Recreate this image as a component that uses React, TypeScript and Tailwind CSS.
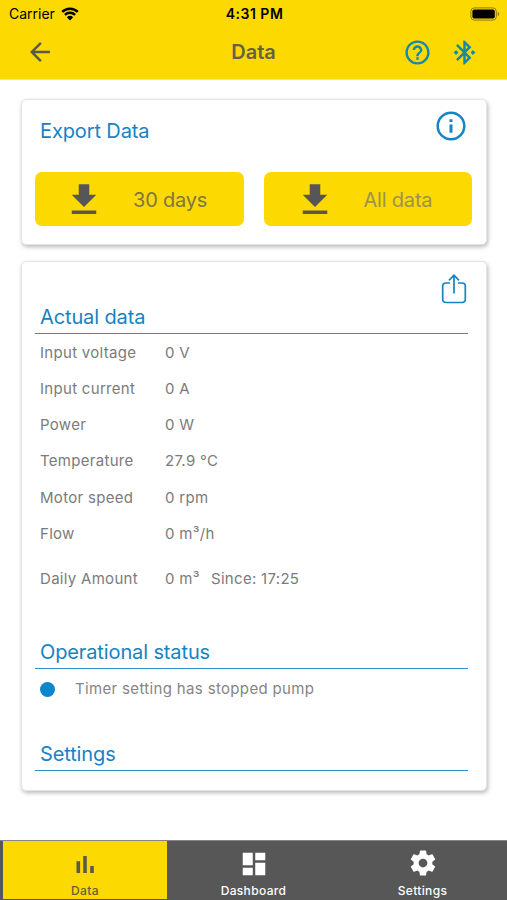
const rows = [
  { label: "Input voltage", value: "0 V" },
  { label: "Input current", value: "0 A" },
  { label: "Power", value: "0 W" },
  { label: "Temperature", value: "27.9 °C" },
  { label: "Motor speed", value: "0 rpm" },
  { label: "Flow", value: "0 m³/h" },
];

function Icon({ d, className }: { d: string; className: string }) {
  return (
    <svg viewBox="0 0 24 24" fill="currentColor" className={className}>
      <path d={d} />
    </svg>
  );
}

function StatusBar() {
  return (
    <div className="flex h-[27px] items-center justify-between pl-[9px] pr-[7px] text-black">
      <div className="flex w-[120px] items-center gap-[6px]">
        <span className="text-[14px]">Carrier</span>
        <svg viewBox="0 0 18 14" className="h-[14px] w-[18px]">
          <path d="M1.2 4.9a11.2 11.2 0 0 1 15.6 0M3.9 7.8a7.3 7.3 0 0 1 10.2 0" fill="none" stroke="black" strokeWidth="2.5" />
          <path d="M9 13.6 5.8 10.2a4.7 4.7 0 0 1 6.4 0z" />
        </svg>
      </div>
      <span className="text-[14px] font-semibold tracking-[0.5px]">4:31 PM</span>
      <div className="flex w-[120px] justify-end">
        <svg viewBox="0 0 30 14" className="h-[14px] w-[30px]">
          <rect x="0.9" y="0.9" width="25.4" height="12.2" rx="3.4" fill="none" stroke="#8d7a08" strokeWidth="1" />
          <rect x="2.4" y="2.4" width="22.4" height="9.2" rx="1.8" />
          <path d="M27.7 4.8c2 .8 2 3.6 0 4.4z" fill="#8d7a08" />
        </svg>
      </div>
    </div>
  );
}

function Header() {
  return (
    <div className="h-[80px] border-b border-[#f8e67c] bg-[#fcd900]">
      <StatusBar />
      <div className="flex h-[50px] items-center justify-between pl-[25px] pr-[28px]">
        <div className="w-[97px]">
          <Icon className="h-[30px] w-[30px] text-[#5b5949]" d="M20 11H7.83l5.59-5.59L12 4l-8 8 8 8 1.41-1.41L7.83 13H20v-2z" />
        </div>
        <h1 className="pl-[3px] text-[20px] font-semibold text-[#66604a]">Data</h1>
        <div className="flex w-[97px] items-center justify-end gap-[18px] text-[#1587b5]">
          <Icon
            className="h-[29px] w-[29px] shrink-0"
            d="M11 18h2v-2h-2v2zm1-16C6.48 2 2 6.48 2 12s4.48 10 10 10 10-4.48 10-10S17.52 2 12 2zm0 18c-4.41 0-8-3.59-8-8s3.59-8 8-8 8 3.59 8 8-3.59 8-8 8zm0-14c-2.21 0-4 1.79-4 4h2c0-1.1.9-2 2-2s2 .9 2 2c0 2-3 1.75-3 5h2c0-2.25 3-2.5 3-5 0-2.21-1.79-4-4-4z"
          />
          <Icon
            className="h-[29px] w-[29px] shrink-0"
            d="M7 12l-2-2-2 2 2 2 2-2zm10.71-4.29L12 2h-1v7.59L6.41 5 5 6.41 10.59 12 5 17.59 6.41 19 11 14.41V22h1l5.71-5.71-4.3-4.29 4.3-4.29zM13 5.83l1.88 1.88L13 9.59V5.83zm1.88 10.46L13 18.17v-3.76l1.88 1.88zM19 10l-2 2 2 2 2-2-2-2z"
          />
        </div>
      </div>
    </div>
  );
}

function ExportButton({ label, iconBox, text }: { label: string; iconBox: string; text: string }) {
  return (
    <button className="flex h-[54px] w-[209px] items-center rounded-[7px] bg-[#fcd900] pt-[2px]">
      <div className={`flex justify-center ${iconBox}`}>
        <Icon className="h-[42px] w-[42px] text-[#565656]" d="M19 9h-4V3H9v6H5l7 7 7-7zM5 18v2h14v-2H5z" />
      </div>
      <span className={`text-[20px] tracking-[-0.2px] ${text}`}>{label}</span>
    </button>
  );
}

function SectionTitle({ children }: { children: string }) {
  return (
    <h2 className="h-[30px] border-b border-[#2e93c8] pl-[5px] text-[20px] leading-[26px] tracking-[-0.12px] text-[#1583c4]">
      {children}
    </h2>
  );
}

export default function App() {
  return (
    <div className="flex h-[900px] w-[507px] flex-col overflow-hidden bg-white font-['Inter',sans-serif]">
      <Header />

      <div className="flex flex-1 flex-col gap-4 pl-[21px] pr-[20px] pt-[19px]">
        {/* EXPORT */}
        <div className="h-[146px] rounded-[5px] border border-[#e4e4e4] bg-white pl-[13px] pr-[14px] shadow-[1px_2px_4px_rgba(0,0,0,0.28)]">
          <div className="flex h-[72px] justify-between pl-[5px] pr-[1px]">
            <h2 className="pt-[18px] text-[20px] leading-[26px] tracking-[-0.12px] text-[#1583c4]">Export Data</h2>
            <svg viewBox="0 0 30 30" className="mr-[5px] mt-[11px] h-[30px] w-[30px]" fill="none" stroke="#1583c4">
              <circle cx="15" cy="15" r="13.3" strokeWidth="2.5" />
              <path d="M15 13.6v8.2M15 8.2v2.8" strokeWidth="3" />
            </svg>
          </div>
          <div className="flex gap-5">
            <ExportButton label="30 days" iconBox="w-[98px]" text="text-[#807644]" />
            <ExportButton label="All data" iconBox="w-[102px]" text="-ml-[2px] text-[#9d9150]" />
          </div>
        </div>

        {/* MEASUREMENTS */}
        <div className="h-[530px] rounded-[5px] border border-[#e4e4e4] bg-white pl-[13px] pr-[18px] shadow-[1px_2px_4px_rgba(0,0,0,0.28)]">
          <div className="flex h-[42px] justify-end pr-px pt-[11px]">
            <svg viewBox="0 0 26 32" className="h-[32px] w-[26px]" fill="none" stroke="#1583c4" strokeWidth="1.7">
              <path d="M9 10H4.7A3 3 0 0 0 1.7 13v13.5a3 3 0 0 0 3 3h16.6a3 3 0 0 0 3-3V13a3 3 0 0 0-3-3H17" />
              <path d="M13 20.5V2.5M8 7.4l5-5.2 5 5.2" />
            </svg>
          </div>

          <SectionTitle>Actual data</SectionTitle>
          <div className="pt-px text-[15px] tracking-[0.3px] text-[#7b7b7b]">
            {rows.map((row) => (
              <div key={row.label} className="flex h-[36.2px] items-center pl-[5px]">
                <span className="w-[125px]">{row.label}</span>
                <span>{row.value}</span>
              </div>
            ))}
            <div className="mt-[9px] flex h-[36px] items-center pl-[5px]">
              <span className="w-[125px]">Daily Amount</span>
              <span className="w-[46px]">0 m³</span>
              <span>Since: 17:25</span>
            </div>
          </div>

          <div className="mt-[42px]">
            <SectionTitle>Operational status</SectionTitle>
          </div>
          <div className="flex h-10 items-center pl-[5px]">
            <div className="h-[15px] w-[15px] rounded-full bg-[#0a86cd]" />
            <span className="pl-[20px] text-[15px] tracking-[0.34px] text-[#858585]">Timer setting has stopped pump</span>
          </div>

          <div className="mt-8">
            <SectionTitle>Settings</SectionTitle>
          </div>
        </div>
      </div>

      {/* TAB BAR */}
      <div className="flex h-[60px] border-t border-[#858585] bg-[#575757] pl-[3px] text-[12px] font-medium tracking-[0.35px] text-white">
        <div className="flex h-[58px] w-[164px] flex-col items-center bg-[#fcd900] pt-[8px] text-[#686039]">
          <svg viewBox="0 0 20 20" className="mt-[5px] h-5 w-5" fill="#5b5949">
            <path d="M1.5 7.2h3.6V19H1.5zM8.2 2h3.6v17H8.2zM15.2 12h3.6v7h-3.6z" />
          </svg>
          <span className="mt-[9px] leading-4">Data</span>
        </div>
        <div className="flex w-[173px] flex-col items-center pt-[8px]">
          <Icon className="h-[30px] w-[30px]" d="M3 13h8V3H3v10zm0 8h8v-6H3v6zm10 0h8V11h-8v10zm0-18v6h8V3h-8z" />
          <span className="mt-[4px] leading-4">Dashboard</span>
        </div>
        <div className="flex flex-1 flex-col items-center pr-[2px] pt-[7px]">
          <Icon
            className="h-[30px] w-[30px]"
            d="M19.43 12.98c.04-.32.07-.64.07-.98s-.03-.66-.07-.98l2.11-1.65c.19-.15.24-.42.12-.64l-2-3.46c-.12-.22-.39-.3-.61-.22l-2.49 1c-.52-.4-1.08-.73-1.69-.98l-.38-2.65C14.46 2.18 14.25 2 14 2h-4c-.25 0-.46.18-.49.42l-.38 2.65c-.61.25-1.17.59-1.69.98l-2.49-1c-.23-.09-.49 0-.61.22l-2 3.46c-.13.22-.07.49.12.64l2.11 1.65c-.04.32-.07.65-.07.98s.03.66.07.98l-2.11 1.65c-.19.15-.24.42-.12.64l2 3.46c.12.22.39.3.61.22l2.49-1c.52.4 1.08.73 1.69.98l.38 2.65c.03.24.24.42.49.42h4c.25 0 .46-.18.49-.42l.38-2.65c.61-.25 1.17-.59 1.69-.98l2.49 1c.23.09.49 0 .61-.22l2-3.46c.12-.22.07-.49-.12-.64l-2.11-1.65zM12 15.5c-1.93 0-3.5-1.57-3.5-3.5s1.57-3.5 3.5-3.5 3.5 1.57 3.5 3.5-1.57 3.5-3.5 3.5z"
          />
          <span className="mt-[5px] leading-4">Settings</span>
        </div>
      </div>
    </div>
  );
}
